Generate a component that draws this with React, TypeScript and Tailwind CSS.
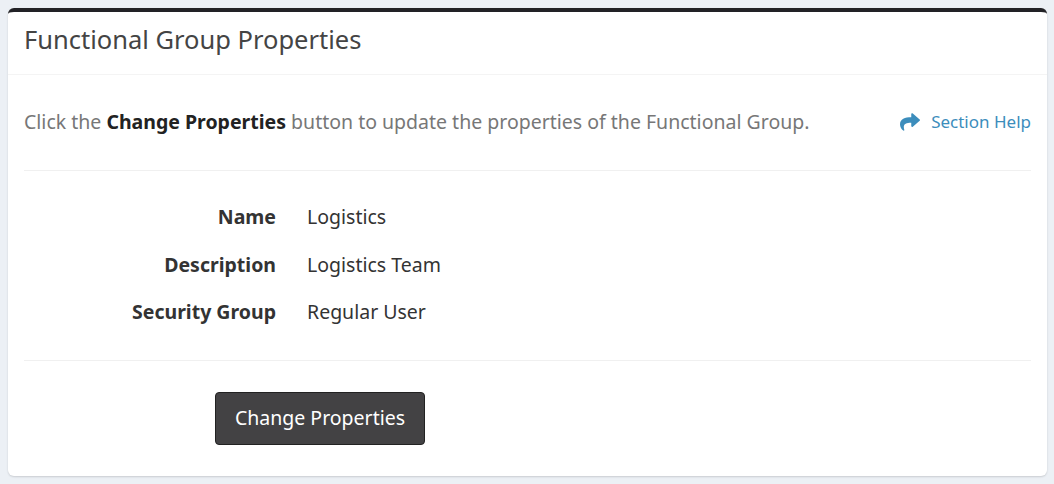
import { FaShare } from "react-icons/fa";

const FIELDS = [
  { label: "Name", value: "Logistics" },
  { label: "Description", value: "Logistics Team" },
  { label: "Security Group", value: "Regular User" },
];

export default function App() {
  return (
    <div className="h-[484px] bg-[#ecf0f5] pt-2 pl-2 font-['Noto_Sans',sans-serif] text-[19.5px]">
      <div className="h-[468px] w-[1039px] rounded-md border-t-4 border-[#222226] bg-white shadow-[0_1px_2px_rgba(0,0,0,0.15)]">
        <div className="flex h-[63px] items-center border-b border-[#f4f4f4] px-4 pb-[7px]">
          <h3 className="text-[25.5px] text-[#444]">Functional Group Properties</h3>
        </div>

        <div className="px-4">
          <div className="flex h-[96px] items-center justify-between border-b border-[#f0f0f0] pb-[1px]">
            <p className="text-[#777]">
              Click the <b className="text-[#222]">Change Properties</b> button to update the properties of the Functional Group.
            </p>
            <a className="flex items-center text-[17px] text-[#3c8dbc]">
              <FaShare className="mr-[11px] h-[20px] w-[20px]" />
              Section Help
            </a>
          </div>

          <div className="flex h-[190px] flex-col justify-center gap-[17.5px] border-b border-[#f0f0f0] pb-[2px] text-[#333]">
            {FIELDS.map((f) => (
              <div key={f.label} className="flex h-[30px] items-center">
                <div className="w-[252px] text-right font-bold">{f.label}</div>
                <div className="ml-[31px]">{f.value}</div>
              </div>
            ))}
          </div>

          <div className="pl-[191px] pt-[31px]">
            <button className="h-[53px] w-[210px] rounded border border-[#222] bg-[#434244] pb-[2px] text-white">
              Change Properties
            </button>
          </div>
        </div>
      </div>
    </div>
  );
}
